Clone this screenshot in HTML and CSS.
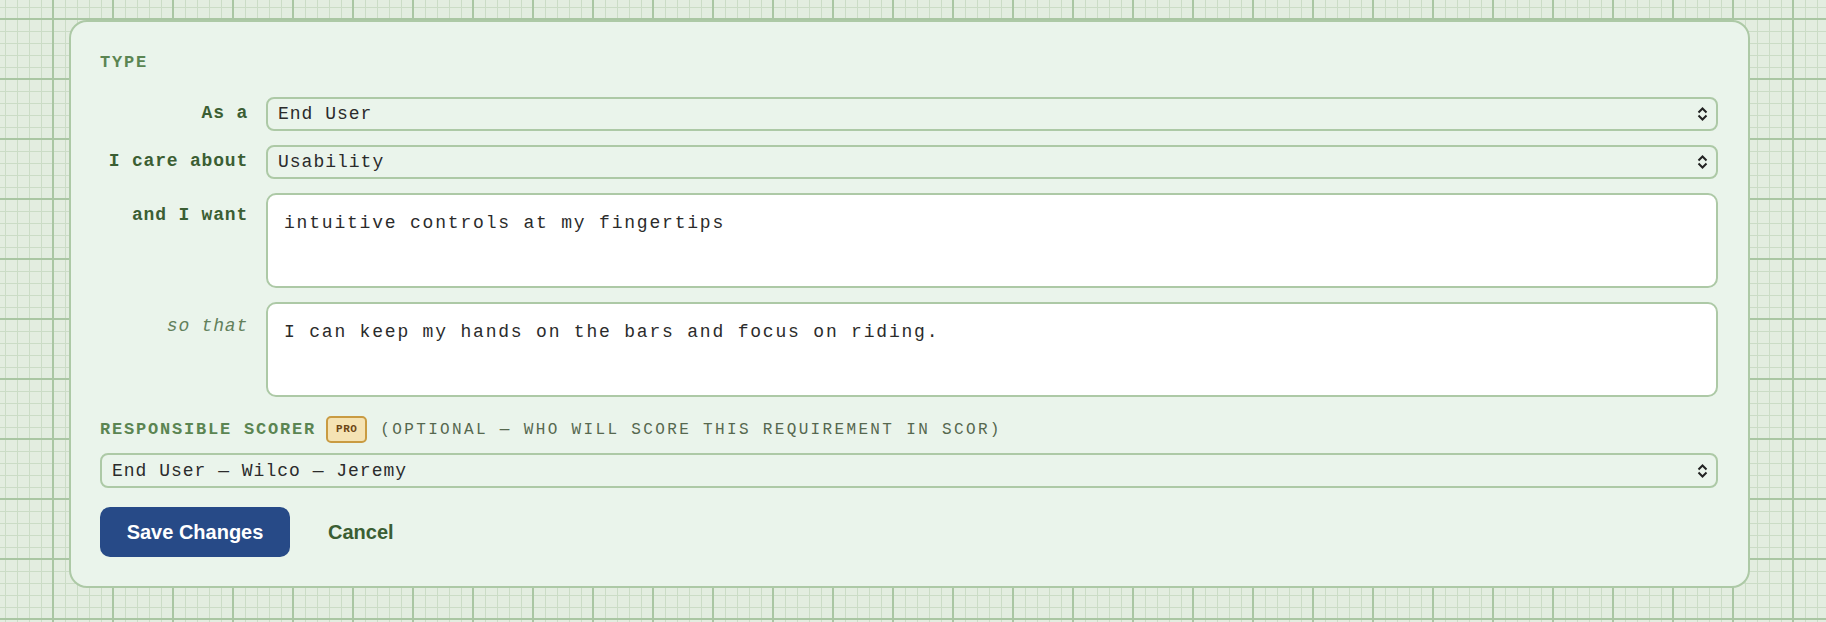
FILE: index.html
```html
<!DOCTYPE html>
<html lang="en">
<head>
  <meta charset="UTF-8">
  <title>Edit Requirement</title>
  <link rel="stylesheet" href="styles.css">
</head>
<body>
  <div class="page">
    <form class="card">
      <div class="section-title">Type</div>

      <div class="story-grid">
        <label class="field-label" for="role">As a</label>
        <div class="select-wrap">
          <select id="role">
            <option>End User</option>
          </select>
          <svg class="chevrons" width="11" height="14" viewBox="0 0 11 14"><path d="M1.5 5.5 L5.5 1.5 L9.5 5.5 M1.5 8.5 L5.5 12.5 L9.5 8.5" fill="none" stroke="#222" stroke-width="2"/></svg>
        </div>

        <label class="field-label" for="concern">I care about</label>
        <div class="select-wrap">
          <select id="concern">
            <option>Usability</option>
          </select>
          <svg class="chevrons" width="11" height="14" viewBox="0 0 11 14"><path d="M1.5 5.5 L5.5 1.5 L9.5 5.5 M1.5 8.5 L5.5 12.5 L9.5 8.5" fill="none" stroke="#222" stroke-width="2"/></svg>
        </div>

        <label class="field-label tall" for="want">and I want</label>
        <textarea id="want">intuitive controls at my fingertips</textarea>

        <label class="field-label tall soft" for="benefit">so that</label>
        <textarea id="benefit">I can keep my hands on the bars and focus on riding.</textarea>
      </div>

      <div class="scorer-head">
        <span class="section-title">Responsible Scorer</span>
        <span class="pro-badge">PRO</span>
        <span class="hint">(optional — who will score this requirement in SCOR)</span>
      </div>
      <div class="select-wrap">
        <select id="scorer">
          <option>End User — Wilco — Jeremy</option>
        </select>
        <svg class="chevrons" width="11" height="14" viewBox="0 0 11 14"><path d="M1.5 5.5 L5.5 1.5 L9.5 5.5 M1.5 8.5 L5.5 12.5 L9.5 8.5" fill="none" stroke="#222" stroke-width="2"/></svg>
      </div>

      <div class="actions">
        <button type="button" class="btn-save">Save Changes</button>
        <button type="button" class="btn-cancel">Cancel</button>
      </div>
    </form>
  </div>
</body>
</html>
```

FILE: styles.css
```css
body {
  margin: 0;
  font-family: 'Liberation Mono', 'Courier New', monospace;
  background-color: #e3ede0;
  background-image:
    linear-gradient(to right, #aac6a3 2px, transparent 2px),
    linear-gradient(to bottom, #aac6a3 2px, transparent 2px),
    linear-gradient(to right, #cbdcc6 1px, transparent 1px),
    linear-gradient(to bottom, #cbdcc6 1px, transparent 1px);
  background-size: 60px 60px, 60px 60px, 12px 12px, 12px 12px;
  background-position: 52px 18px, 52px 18px, 5px 7px, 5px 7px;
  min-height: 100vh;
}
.page {
  padding: 20px 76px 0 69px;
}
.card {
  background: #eaf4eb;
  border: 2px solid #adc9a6;
  border-radius: 18px;
  padding: 31px 30px 29px 29px;
}
.section-title {
  font-size: 17px;
  font-weight: bold;
  letter-spacing: 1.8px;
  text-transform: uppercase;
  color: #5b8552;
  line-height: 20px;
}
.story-grid {
  display: grid;
  grid-template-columns: 148px 1fr;
  column-gap: 18px;
  row-gap: 14px;
  margin-top: 24px;
}
.field-label {
  font-size: 18px;
  font-weight: bold;
  letter-spacing: 0.8px;
  color: #3b5e33;
  text-align: right;
  line-height: 32px;
}
.field-label.tall {
  padding-top: 6px;
}
.field-label.soft {
  font-weight: normal;
  font-style: italic;
  color: #62805b;
  padding-top: 8px;
}
.select-wrap {
  position: relative;
}
select {
  appearance: none;
  -webkit-appearance: none;
  width: 100%;
  height: 34px;
  box-sizing: border-box;
  border: 2px solid #adc9a6;
  border-radius: 8px;
  background: #eaf4eb;
  font-family: inherit;
  font-size: 18px;
  letter-spacing: 1px;
  color: #2b2b2b;
  padding: 0 30px 0 10px;
}
.chevrons {
  position: absolute;
  right: 10px;
  top: 50%;
  margin-top: -7px;
  pointer-events: none;
}
textarea {
  display: block;
  width: 100%;
  height: 95px;
  box-sizing: border-box;
  border: 2px solid #adc9a6;
  border-radius: 10px;
  background: #fff;
  font-family: inherit;
  font-size: 18px;
  letter-spacing: 1.8px;
  line-height: 24px;
  color: #2b2b2b;
  padding: 16px 16px;
  resize: none;
}
.scorer-head {
  display: flex;
  align-items: center;
  margin-top: 19px;
  margin-bottom: 10px;
  height: 27px;
}
.pro-badge {
  margin-left: 10px;
  background: #f5e3b4;
  border: 2px solid #c99b42;
  border-radius: 5px;
  color: #6d4615;
  font-size: 11px;
  font-weight: bold;
  letter-spacing: 0.5px;
  padding: 0 8px;
  height: 23px;
  line-height: 23px;
}
.hint {
  margin-left: 13px;
  font-size: 16px;
  letter-spacing: 2.35px;
  text-transform: uppercase;
  color: #56684f;
}
#scorer {
  height: 35px;
}
.actions {
  display: flex;
  align-items: center;
  margin-top: 19px;
}
.btn-save {
  font-family: 'Liberation Sans', Arial, sans-serif;
  font-weight: bold;
  font-size: 20px;
  color: #fff;
  background: #274a87;
  border: none;
  border-radius: 10px;
  width: 190px;
  height: 50px;
  cursor: pointer;
}
.btn-cancel {
  font-family: 'Liberation Sans', Arial, sans-serif;
  font-weight: bold;
  font-size: 20px;
  color: #3b5e33;
  background: none;
  border: none;
  margin-left: 20px;
  padding: 0 18px;
  height: 50px;
  cursor: pointer;
}
```
